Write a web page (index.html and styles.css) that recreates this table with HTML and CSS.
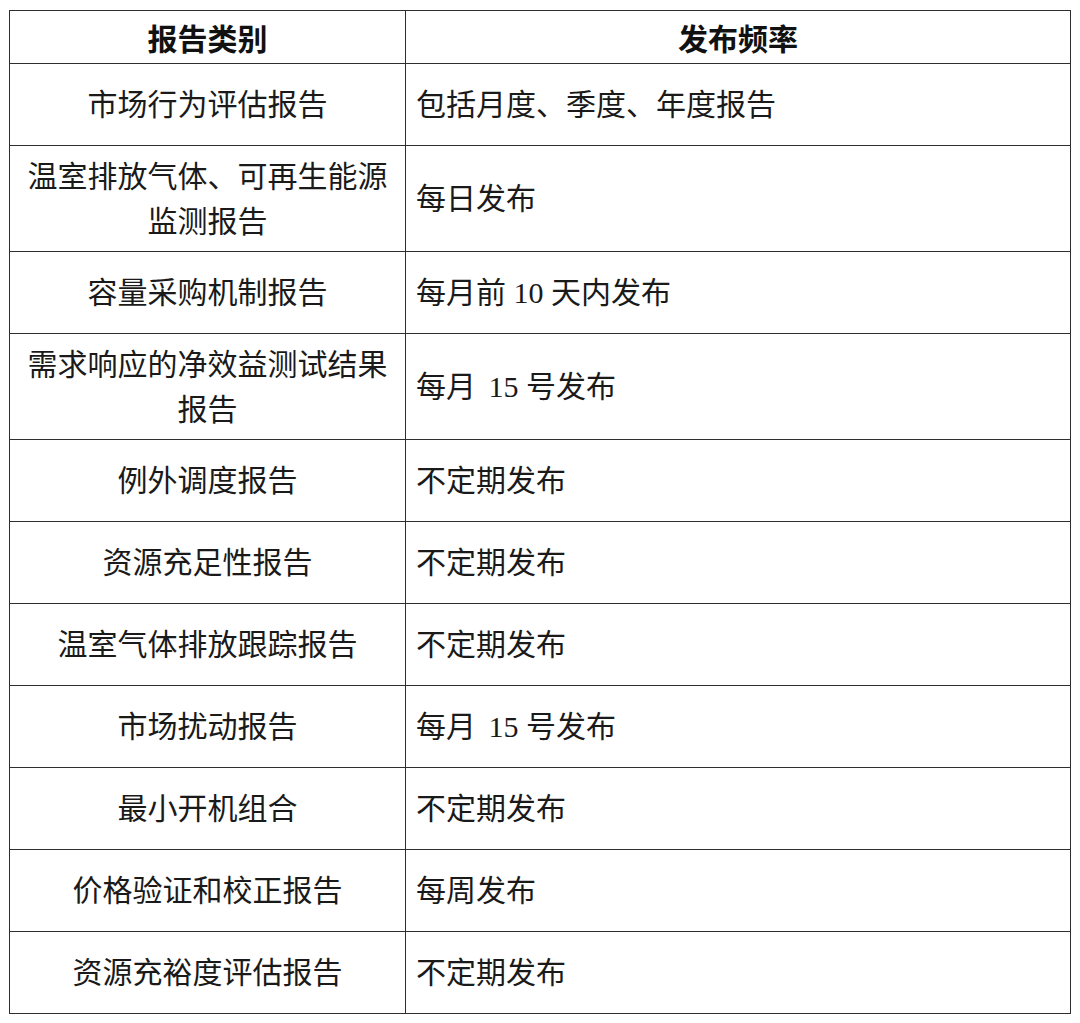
FILE: index.html
```html
<!DOCTYPE html>
<html lang="zh-CN">
<head>
<meta charset="utf-8">
<title>报告类别</title>
<link rel="stylesheet" href="styles.css">
</head>
<body>
<table class="report-table">
  <colgroup>
    <col class="col-type">
    <col class="col-freq">
  </colgroup>
  <thead>
    <tr class="head-row">
      <th>报告类别</th>
      <th>发布频率</th>
    </tr>
  </thead>
  <tbody>
    <tr><td class="type">市场行为评估报告</td><td class="freq">包括月度、季度、年度报告</td></tr>
    <tr><td class="type">温室排放气体、可再生能源监测报告</td><td class="freq">每日发布</td></tr>
    <tr><td class="type">容量采购机制报告</td><td class="freq">每月前 10 天内发布</td></tr>
    <tr><td class="type">需求响应的净效益测试结果报告</td><td class="freq">每月 &#8198;15 号发布</td></tr>
    <tr><td class="type">例外调度报告</td><td class="freq">不定期发布</td></tr>
    <tr><td class="type">资源充足性报告</td><td class="freq">不定期发布</td></tr>
    <tr><td class="type">温室气体排放跟踪报告</td><td class="freq">不定期发布</td></tr>
    <tr><td class="type">市场扰动报告</td><td class="freq">每月 &#8198;15 号发布</td></tr>
    <tr><td class="type">最小开机组合</td><td class="freq">不定期发布</td></tr>
    <tr><td class="type">价格验证和校正报告</td><td class="freq">每周发布</td></tr>
    <tr><td class="type">资源充裕度评估报告</td><td class="freq">不定期发布</td></tr>
  </tbody>
</table>
</body>
</html>
```

FILE: styles.css
```css
html, body {
  background: #ffffff;
}
body {
  margin: 10px 0 0 9px;
  font-family: "Liberation Serif", "Noto Sans CJK SC", serif;
  color: #1a1a1a;
}
.report-table {
  border-collapse: collapse;
  width: 1062px;
  table-layout: fixed;
}
.col-type {
  width: 396px;
}
.report-table th,
.report-table td {
  border: 1.5px solid #2e2e2e;
  font-size: 30px;
  line-height: 45px;
  padding: 7.5px 10px;
  vertical-align: middle;
}
.head-row th {
  height: 52px;
  padding: 0 10px;
  font-family: "Noto Sans CJK SC", sans-serif;
  font-weight: 700;
  text-align: center;
  line-height: 40px;
  color: #111;
}
.report-table tbody tr {
  height: 82px;
}
.type {
  text-align: center;
}
.freq {
  text-align: left;
  padding-left: 12px;
}
```
